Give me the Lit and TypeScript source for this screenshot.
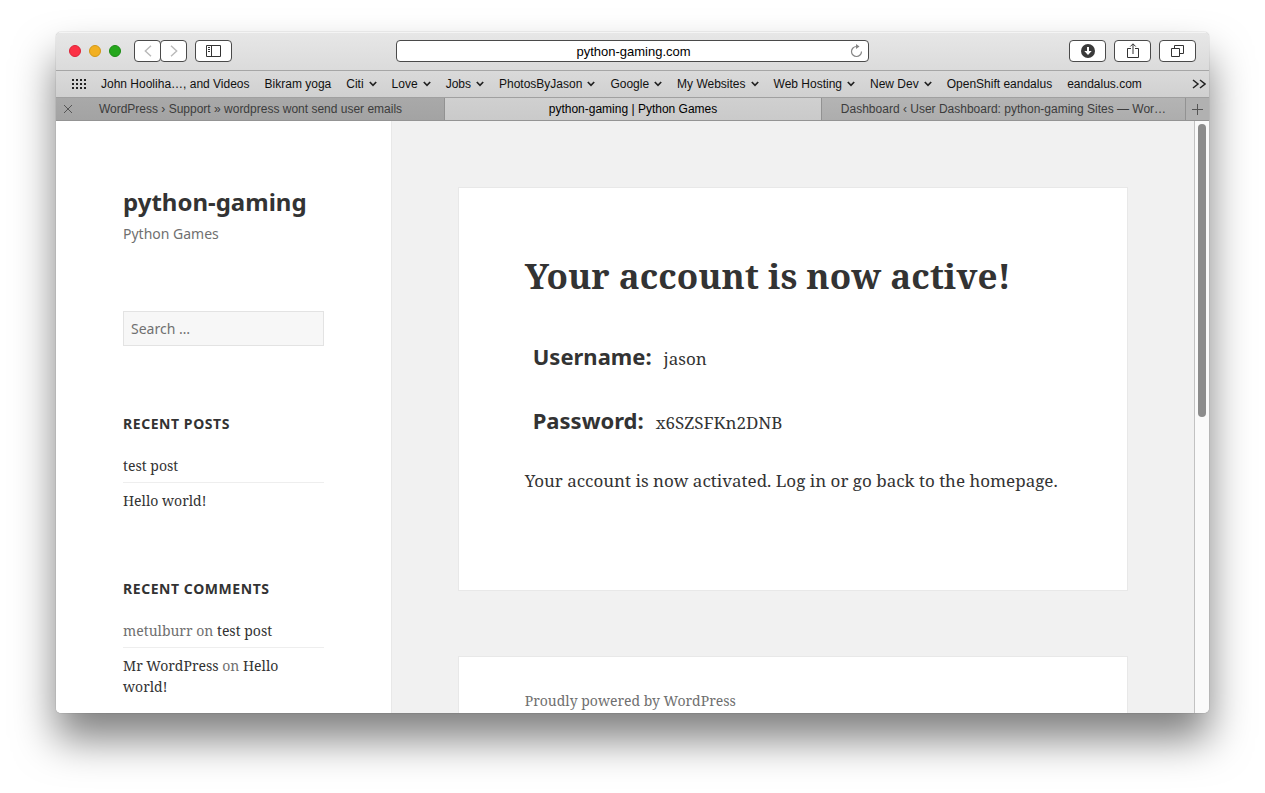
import { LitElement, html, css } from "lit";
import { customElement } from "lit/decorators.js";

interface Bookmark {
  label: string;
  folder: boolean;
}

const BOOKMARKS: Bookmark[] = [
  { label: "John Hooliha…, and Videos", folder: false },
  { label: "Bikram yoga", folder: false },
  { label: "Citi", folder: true },
  { label: "Love", folder: true },
  { label: "Jobs", folder: true },
  { label: "PhotosByJason", folder: true },
  { label: "Google", folder: true },
  { label: "My Websites", folder: true },
  { label: "Web Hosting", folder: true },
  { label: "New Dev", folder: true },
  { label: "OpenShift eandalus", folder: false },
  { label: "eandalus.com", folder: false },
];

@customElement("browser-chrome")
class BrowserChrome extends LitElement {
  static styles = css`
    :host {
      display: block;
      flex: none;
      font-family: "Liberation Sans", Arial, sans-serif;
      font-size: 12px;
      color: #111;
    }
    button,
    input {
      font: inherit;
      color: inherit;
      margin: 0;
      padding: 0;
      border: 0;
      background: none;
      box-sizing: border-box;
    }
    a {
      color: inherit;
      text-decoration: none;
    }
    svg {
      display: block;
      flex: none;
    }
    .toolbar {
      display: grid;
      grid-template-columns: 1fr minmax(0, 473px) 1fr;
      align-items: center;
      height: 39px;
      box-sizing: border-box;
      border-bottom: 1px solid #a6a6a6;
      box-shadow: inset 0 1px 0 #f4f4f4;
      background: linear-gradient(#e7e7e7, #dbdbdb);
    }
    .group {
      display: flex;
      align-items: center;
    }
    .lights {
      gap: 8px;
      padding: 0 13px;
    }
    .light {
      width: 12px;
      height: 12px;
      border-radius: 50%;
    }
    .close {
      background: #fc3146;
      border: 1px solid #dc2338;
    }
    .minimize {
      background: #f2b022;
      border: 1px solid #d29816;
    }
    .maximize {
      background: #25a71c;
      border: 1px solid #1c8c15;
    }
    .key {
      width: 37px;
      height: 22px;
      display: grid;
      place-items: center;
      border: 1px solid #4a4a4a;
      border-radius: 4px;
      background: #fff;
    }
    .nav {
      width: 27px;
      color: #b9b9b9;
    }
    .forward {
      margin: 0 8px 0 -1px;
    }
    .address {
      display: flex;
      align-items: center;
      height: 22px;
      padding: 0 5px 0 20px;
      box-sizing: border-box;
      border: 1px solid #4a4a4a;
      border-radius: 4px;
      background: #fff;
    }
    .address input {
      flex: 1;
      min-width: 0;
      font-size: 13px;
      text-align: center;
      color: #000;
      outline: none;
    }
    .actions {
      justify-content: flex-end;
      gap: 8px;
      padding-right: 13px;
    }
    .bookmarks {
      display: flex;
      align-items: center;
      height: 26px;
      padding: 0 3px 0 16px;
      border-bottom: 1px solid #a0a0a0;
      background: linear-gradient(#dadada, #d0d0d0);
      white-space: nowrap;
    }
    .list {
      display: flex;
      flex: 1;
      min-width: 0;
      gap: 15px;
      padding-left: 14px;
      overflow: hidden;
    }
    .item {
      display: flex;
      align-items: center;
      gap: 5px;
    }
    .tabs {
      display: grid;
      grid-template-columns: minmax(0, 389fr) minmax(0, 377fr) minmax(0, 364fr) 23px;
      height: 23px;
      border-bottom: 1px solid #949494;
      box-sizing: border-box;
      background: #b1b1b1;
      color: #3c3c3c;
    }
    .tab {
      display: flex;
      align-items: center;
      min-width: 0;
      padding: 0 16px;
      border-right: 1px solid #929292;
      box-sizing: border-box;
      background: linear-gradient(#b4b4b4, #adadad);
    }
    .tab a {
      flex: 1;
      min-width: 0;
      text-align: center;
      overflow: hidden;
      text-overflow: ellipsis;
      white-space: nowrap;
    }
    .first {
      padding: 0 16px 0 7px;
      background: linear-gradient(#a9a9a9, #a3a3a3);
    }
    .active {
      color: #000;
      background: linear-gradient(#d0d0d0, #cacaca);
    }
    .add {
      display: grid;
      place-items: center;
    }
  `;

  private chevron() {
    return html`<svg width="8" height="6" viewBox="0 0 8 6" fill="none" stroke="#222" stroke-width="1.7">
      <path d="M.8 1 4 4.300 7.200 1" />
    </svg>`;
  }

  private bookmark(b: Bookmark) {
    return b.folder
      ? html`<button class="item">${b.label}${this.chevron()}</button>`
      : html`<a class="item" href="#">${b.label}</a>`;
  }

  render() {
    return html`
      <div class="toolbar">
        <div class="group">
          <div class="group lights">
            <button class="light close" aria-label="Close window"></button>
            <button class="light minimize" aria-label="Minimize window"></button>
            <button class="light maximize" aria-label="Full screen"></button>
          </div>
          <button class="key nav" aria-label="Back">
            <svg width="8" height="12" viewBox="0 0 8 12" fill="none" stroke="currentColor" stroke-width="1.4">
              <path d="M7 .7 1.300 6 7 11.300" />
            </svg>
          </button>
          <button class="key nav forward" aria-label="Forward">
            <svg width="8" height="12" viewBox="0 0 8 12" fill="none" stroke="currentColor" stroke-width="1.4">
              <path d="M1 .7 6.700 6 1 11.300" />
            </svg>
          </button>
          <button class="key" aria-label="Show sidebar">
            <svg width="15" height="12" viewBox="0 0 15 12" fill="none" stroke="#333">
              <path d="M.5.5h14v11H.5zM5.500.5v11" />
              <path d="M2 2.500h2M2 4.500h2M2 6.500h2" />
            </svg>
          </button>
        </div>
        <div class="address">
          <input type="text" aria-label="Address" .value=${"python-gaming.com"} />
          <button aria-label="Reload">
            <svg width="13" height="14" viewBox="0 0 13 14" fill="none" stroke="#858585" stroke-width="1.2">
              <path d="M7.500 2.500H6.500A5 5 0 1 0 11.500 7.500" />
              <path d="M6 0 9.500 2.500 6 5z" fill="#858585" stroke="none" />
            </svg>
          </button>
        </div>
        <div class="group actions">
          <button class="key" aria-label="Downloads">
            <svg width="14" height="14" viewBox="0 0 14 14">
              <circle cx="7" cy="7" r="7" fill="#3a3a3a" />
              <path d="M6 3h2v4h2.700L7 10.900 3.300 7H6z" fill="#fff" />
            </svg>
          </button>
          <button class="key" aria-label="Share">
            <svg width="12" height="16" viewBox="0 0 12 16" fill="none" stroke="#333">
              <path d="M4 5.500H.5v9h11v-9H8M6 11V1M3.300 3.500 6 .8l2.700 2.700" />
            </svg>
          </button>
          <button class="key" aria-label="Show all tabs">
            <svg width="13" height="12" viewBox="0 0 13 12" fill="none" stroke="#333">
              <path d="M.5 3.500h8v8h-8zM3.500 3.500v-3h9v8h-4" />
            </svg>
          </button>
        </div>
      </div>

      <nav class="bookmarks" aria-label="Bookmarks">
        <button aria-label="Top sites">
          <svg width="15" height="11" viewBox="0 0 15 11" fill="none" stroke="#222" stroke-width="2" stroke-dasharray="2 2">
            <path d="M0 1h15M0 5h15M0 9h15" />
          </svg>
        </button>
        <div class="list">${BOOKMARKS.map((b) => this.bookmark(b))}</div>
        <button aria-label="More bookmarks">
          <svg width="14" height="10" viewBox="0 0 14 10" fill="none" stroke="#222" stroke-width="1.5">
            <path d="M1 1l5 4-5 4M8 1l5 4-5 4" />
          </svg>
        </button>
      </nav>

      <div class="tabs">
        <div class="tab first">
          <button aria-label="Close tab">
            <svg width="10" height="10" viewBox="0 0 10 10" fill="none" stroke="#555">
              <path d="M1 1l8 8M9 1 1 9" />
            </svg>
          </button>
          <a href="#">WordPress › Support » wordpress wont send user emails</a>
        </div>
        <div class="tab active"><a href="#">python-gaming | Python Games</a></div>
        <div class="tab"><a href="#">Dashboard ‹ User Dashboard: python-gaming Sites — Wor…</a></div>
        <button class="add" aria-label="New tab">
          <svg width="11" height="11" viewBox="0 0 11 11" stroke="#555"><path d="M5.500 0v11M0 5.500h11" /></svg>
        </button>
      </div>
    `;
  }
}

@customElement("blog-page")
class BlogPage extends LitElement {
  static styles = css`
    :host {
      display: flex;
      flex: 1;
      min-width: 0;
      background: #f1f1f1;
      color: #333;
      font-family: "Noto Serif", "Liberation Serif", serif;
      font-size: 14px;
      line-height: 21px;
      overflow: hidden;
    }
    a {
      color: inherit;
      text-decoration: none;
    }
    h1,
    h2,
    h3,
    p,
    ul,
    dl,
    dd {
      margin: 0;
      padding: 0;
    }
    .sidebar {
      width: 29.5%;
      flex: none;
      box-sizing: border-box;
      padding: 67px 67px 0;
      border-right: 1px solid #e8e8e8;
      background: #fff;
    }
    .title {
      font: bold 24px/27px "Noto Sans", sans-serif;
    }
    .tagline {
      margin-top: 8px;
      font-family: "Noto Sans", sans-serif;
      color: #707070;
    }
    .search {
      display: block;
      width: 100%;
      height: 35px;
      margin: 67px 0;
      padding: 0 7px;
      box-sizing: border-box;
      border: 1px solid #e3e3e3;
      border-radius: 0;
      background: #f7f7f7;
      font: 14px "Noto Sans", sans-serif;
      outline: none;
    }
    .search::placeholder {
      color: #707070;
    }
    .widget {
      margin-bottom: 67px;
    }
    .heading {
      font: bold 14px/21px "Noto Sans", sans-serif;
      letter-spacing: 0.04em;
      text-transform: uppercase;
      margin-bottom: 21px;
    }
    .entries {
      list-style: none;
    }
    .entries li {
      padding: 7px 0 6px;
      border-bottom: 1px solid #eee;
      color: #707070;
    }
    .entries li:first-child {
      padding-top: 0;
    }
    .entries li:last-child {
      padding-bottom: 0;
      border-bottom: 0;
    }
    .entries a {
      color: #333;
    }
    .main {
      flex: 1;
      min-width: 0;
      display: flex;
      flex-direction: column;
      gap: 65px;
      padding: 66px 66px 0;
    }
    .card {
      flex: none;
      padding: 66px;
      border: 1px solid #e8e8e8;
      background: #fff;
      font-size: 17px;
      line-height: 30px;
    }
    .card h2 {
      font-size: 35px;
      line-height: 44px;
      margin-bottom: 40px;
    }
    .row {
      display: flex;
      align-items: baseline;
      gap: 12px;
      padding: 0 8px;
      margin-bottom: 28px;
    }
    .row dt {
      font: bold 22px/36px "Noto Sans", sans-serif;
    }
    .note {
      margin-bottom: 28px;
    }
    .footer {
      padding: 33px 66px;
      font-size: 14px;
      line-height: 21px;
      color: #707070;
    }
  `;

  render() {
    return html`
      <aside class="sidebar">
        <h1 class="title"><a href="#">python-gaming</a></h1>
        <p class="tagline">Python Games</p>
        <input class="search" type="search" placeholder="Search …" aria-label="Search" />
        <section class="widget">
          <h3 class="heading">Recent Posts</h3>
          <ul class="entries">
            <li><a href="#">test post</a></li>
            <li><a href="#">Hello world!</a></li>
          </ul>
        </section>
        <section class="widget">
          <h3 class="heading">Recent Comments</h3>
          <ul class="entries">
            <li>metulburr on <a href="#">test post</a></li>
            <li><a href="#">Mr WordPress</a> on <a href="#">Hello world!</a></li>
          </ul>
        </section>
      </aside>
      <main class="main">
        <article class="card">
          <h2>Your account is now active!</h2>
          <dl>
            <div class="row"><dt>Username:</dt><dd>jason</dd></div>
            <div class="row"><dt>Password:</dt><dd>x6SZSFKn2DNB</dd></div>
          </dl>
          <p class="note">Your account is now activated. <a href="#">Log in</a> or go back to the <a href="#">homepage</a>.</p>
        </article>
        <footer class="card footer"><a href="#">Proudly powered by WordPress</a></footer>
      </main>
    `;
  }
}

@customElement("app-root")
class AppRoot extends LitElement {
  static styles = css`
    :host {
      display: flex;
      height: 100vh;
      box-sizing: border-box;
      padding: 32px 56px 80px;
      background: #fff;
      overflow: hidden;
    }
    .window {
      flex: 1;
      min-width: 0;
      display: flex;
      flex-direction: column;
      border-radius: 5px;
      overflow: hidden;
      background: #fff;
      box-shadow:
        0 0 1px rgba(0, 0, 0, 0.5),
        0 26px 42px rgba(0, 0, 0, 0.5);
    }
    .viewport {
      flex: 1;
      min-height: 0;
      display: flex;
    }
    .scrollbar {
      flex: none;
      width: 15px;
      box-sizing: border-box;
      padding: 3px;
      border-left: 1px solid #c2c2c2;
      background: #fafafa;
    }
    .thumb {
      height: 50%;
      border-radius: 4px;
      background: #8c8c8c;
    }
  `;

  render() {
    return html`
      <div class="window">
        <browser-chrome></browser-chrome>
        <div class="viewport">
          <blog-page></blog-page>
          <div class="scrollbar"><div class="thumb"></div></div>
        </div>
      </div>
    `;
  }
}
